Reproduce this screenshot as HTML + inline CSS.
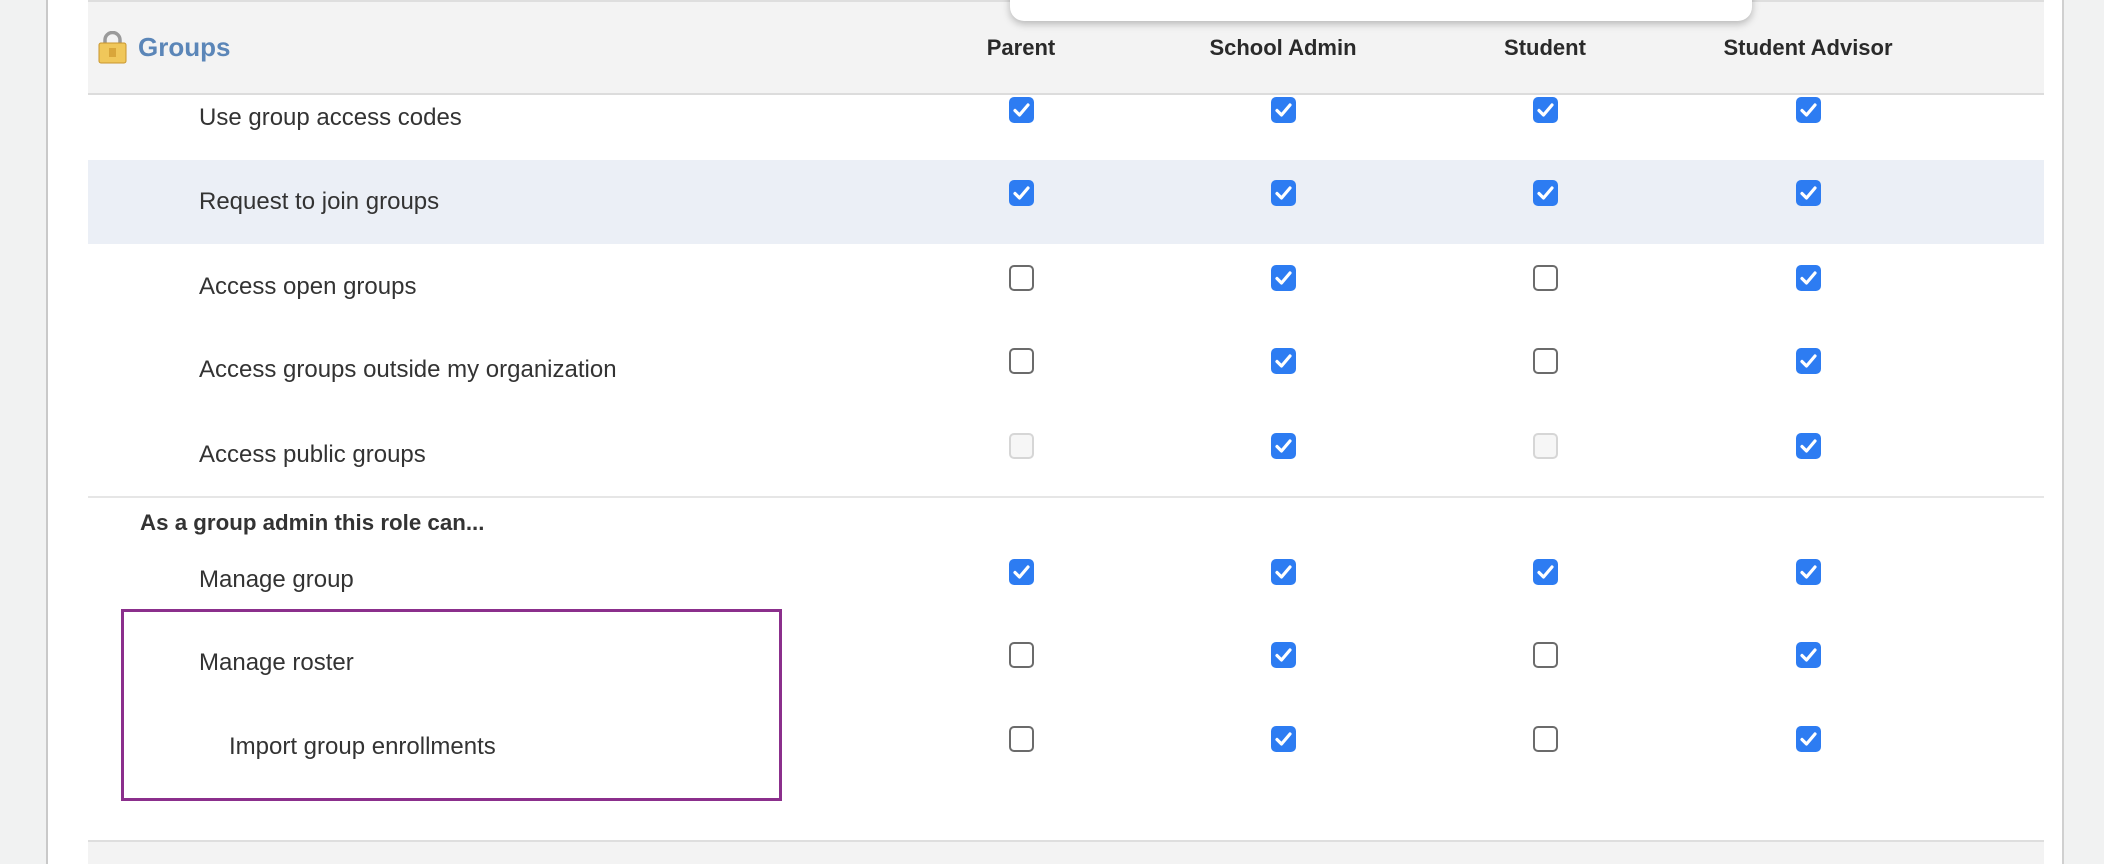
<!DOCTYPE html>
<html><head><meta charset="utf-8"><style>
*{margin:0;padding:0;box-sizing:border-box}
body{width:2104px;height:864px;overflow:hidden;background:#fff;font-family:"Liberation Sans",Arial,sans-serif;color:#333;position:relative}
.abs{position:absolute}
.t{position:absolute;font-size:24px;line-height:28px;white-space:nowrap}
.cb{position:absolute;width:25px;height:26px;border-radius:5px;margin-left:-12px;margin-top:-13px}
.on{background:#2d7cf2}
.off{background:#fff;border:2px solid #6b6b6b}
.dis{background:#f6f6f6;border:2px solid #d6d6d6}
.h{position:absolute;top:34px;font-size:22px;font-weight:bold;line-height:28px;transform:translateX(-50%);white-space:nowrap;color:#2a2a2a}
</style></head><body>
<div class="abs" style="left:0;top:0;width:47px;height:864px;background:#f1f2f2"></div>
<div class="abs" style="left:46px;top:0;width:2px;height:864px;background:#c9c9c9"></div>
<div class="abs" style="left:2062px;top:0;width:42px;height:864px;background:#f1f2f2"></div>
<div class="abs" style="left:2062px;top:0;width:2px;height:864px;background:#d0d0d0"></div>
<div class="abs" style="left:88px;top:0;width:1956px;height:95px;background:#f3f3f3;border-top:2px solid #dedede;border-bottom:2px solid #dcdcdc"></div>
<div class="abs" style="left:1010px;top:-20px;width:742px;height:41px;background:#fff;border-radius:14px;box-shadow:0 3px 8px rgba(0,0,0,.25)"></div>
<svg class="abs" style="left:98px;top:31px" width="29" height="33" viewBox="0 0 29 33">
<path d="M7 14V9a7.5 7.5 0 0 1 15 0v5" fill="none" stroke="#9a9a9a" stroke-width="3.5"/>
<rect x="1" y="12" width="27" height="20" rx="2" fill="#f0c75a" stroke="#c9962e"/>
<rect x="11" y="17" width="7" height="9" fill="#d9a63a"/>
</svg>
<div class="abs" style="left:138px;top:31px;font-size:26px;font-weight:bold;color:#5b86b8;line-height:32px">Groups</div>
<div class="h" style="left:1021px">Parent</div>
<div class="h" style="left:1283px">School Admin</div>
<div class="h" style="left:1545px">Student</div>
<div class="h" style="left:1808px">Student Advisor</div>
<div class="abs" style="left:88px;top:160px;width:1956px;height:84px;background:#ebeff6"></div>
<div class="abs" style="left:88px;top:496px;width:1956px;height:2px;background:#e6e6e6"></div>
<div class="abs" style="left:88px;top:840px;width:1956px;height:24px;background:#f3f3f3;border-top:2px solid #dedede"></div>
<div class="abs" style="left:121px;top:609px;width:661px;height:192px;border:3px solid #8b2f8c"></div>
<div class="t" style="left:199px;top:104px">Use group access codes</div>
<div class="t" style="left:199px;top:188px">Request to join groups</div>
<div class="t" style="left:199px;top:273px">Access open groups</div>
<div class="t" style="left:199px;top:356px">Access groups outside my organization</div>
<div class="t" style="left:199px;top:441px">Access public groups</div>
<div class="t" style="left:140px;top:509px;font-weight:bold;font-size:22.3px">As a group admin this role can...</div>
<div class="t" style="left:199px;top:566px">Manage group</div>
<div class="t" style="left:199px;top:649px">Manage roster</div>
<div class="t" style="left:229px;top:733px">Import group enrollments</div>
<svg width="0" height="0" style="position:absolute"><defs><symbol id="ck" viewBox="0 0 25 26"><path d="M6 13.5l4.5 4.5L19 8" fill="none" stroke="#fff" stroke-width="3.2" stroke-linecap="round" stroke-linejoin="round"/></symbol></defs></svg>
<div id="g"></div>
<script>
var xs=[1021,1283,1545,1808],ys=[110,193,278,361,446,572,655,739];
var st=["1111","1111","0101","0101","d1d1","1111","0101","0101"];
var h="";
for(var r=0;r<8;r++)for(var c=0;c<4;c++){var s=st[r][c];
h+='<div class="cb '+(s=="1"?"on":s=="0"?"off":"dis")+'" style="left:'+xs[c]+'px;top:'+ys[r]+'px">'+(s=="1"?'<svg width="25" height="26"><use href="#ck"/></svg>':'')+'</div>';}
document.getElementById("g").innerHTML=h;
</script>
</body></html>
